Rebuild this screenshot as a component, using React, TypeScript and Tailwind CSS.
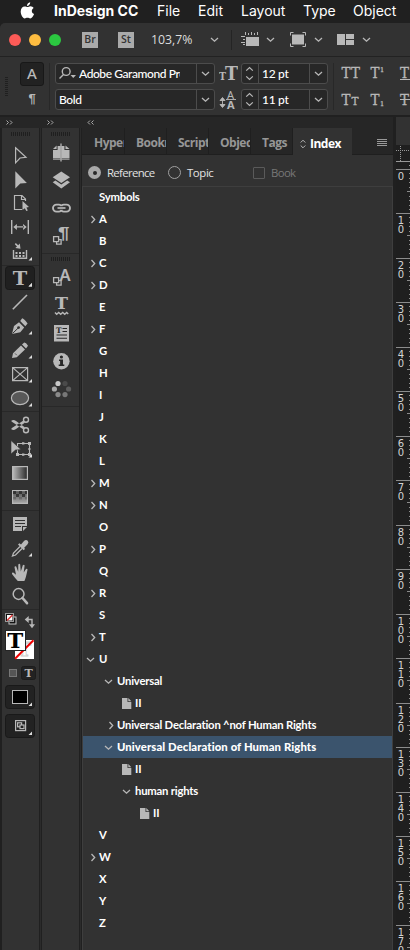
import React from "react";

const UI = "font-['Open_Sans','Noto_Sans',sans-serif]";
const SLAB = "DejaVu Serif, serif";
const G = "#b8b8b8";

type Kids = { children?: React.ReactNode };

function Chevron({ dir = "down", className = "" }: { dir?: "down" | "right"; className?: string }) {
  return (
    <svg width="9" height="9" viewBox="0 0 9 9" className={"shrink-0 " + className} fill="none" stroke={G} strokeWidth="1.3">
      {dir === "down" ? <path d="M1 3 L4.5 6.2 L8 3" /> : <path d="M2.5 1 L5.7 4.5 L2.5 8" />}
    </svg>
  );
}

/* ---------- menu bar ---------- */
function MenuBar() {
  return (
    <div className="flex h-[23px] shrink-0 items-center bg-[#202020] pl-[20px] font-['Inter',sans-serif] text-[14px] leading-none text-white">
      <svg width="15" height="17" viewBox="0 0 15 17" fill="#fff" className="mt-[-2px]">
        <path d="M10.2 0.3 C10.3 2.3 8.8 4 7 4 C6.8 2.2 8.4 0.5 10.2 0.3 Z M10.3 4.2 C11.8 4.2 13 5 13.6 5.9 C11 7.4 11.4 11 14.1 12 C13.3 14.2 11.8 16.4 10.3 16.4 C9.2 16.4 8.8 15.7 7.5 15.7 C6.1 15.7 5.7 16.4 4.7 16.4 C2.8 16.4 0.7 12.9 0.7 9.6 C0.7 6.3 2.6 4.4 4.7 4.4 C6 4.4 6.8 5.1 7.6 5.1 C8.4 5.1 9.2 4.2 10.3 4.2 Z" />
      </svg>
      <b className="-mt-0.5 ml-[19px] w-[103px] whitespace-nowrap font-bold">InDesign CC</b>
      <span className="-mt-0.5 w-[41px]">File</span>
      <span className="-mt-0.5 w-[43px]">Edit</span>
      <span className="-mt-0.5 w-[62px]">Layout</span>
      <span className="-mt-0.5 w-[50px]">Type</span>
      <span className="-mt-0.5">Object</span>
    </div>
  );
}

function Badge({ children }: Kids) {
  return <div className="flex h-4 w-4 items-center justify-center bg-[#aaaaaa] text-[10.5px] font-semibold leading-none text-[#333]">{children}</div>;
}

function TitleBar() {
  return (
    <div className="flex h-[34px] shrink-0 items-center rounded-tl-[5px] border-b border-[#222] bg-[#323232] pl-[9px]">
      <div className="flex w-[73px] gap-2">
        <i className="h-3 w-3 rounded-full bg-[#fc5b57]" />
        <i className="h-3 w-3 rounded-full bg-[#fdbc40]" />
        <i className="h-3 w-3 rounded-full bg-[#2bc840]" />
      </div>
      <Badge>Br</Badge>
      <div className="w-5" />
      <Badge>St</Badge>
      <span className="ml-[17px] w-[59px] pt-0.5 text-[12.3px] leading-none text-[#ddd]">103,7%</span>
      <Chevron />
      <i className="ml-3 h-5 w-px bg-[#242424]" />
      <svg width="19" height="15" viewBox="0 0 19 15" className="ml-[9px] mr-[6px]" fill={G}>
        <rect x="5" y="5" width="13" height="9" />
        <path d="M4 0h1v3h-1zM7 1h1v2h-1zM10 0h1v3h-1zM13 1h1v2h-1zM16 0h1v3h-1zM0 4h4v1h-4zM2 7h2v1h-2zM0 10h4v1h-4zM2 12h2v1h-2z" />
      </svg>
      <Chevron />
      <svg width="17" height="15" viewBox="0 0 17 15" className="ml-[15px] mr-[7px]" fill="none" stroke={G}>
        <rect x="2" y="2.5" width="12" height="10" fill={G} stroke="none" />
        <path d="M0.5 3.5v-3h3M12.5 0.5h3v3M0.5 11.5v3h3M12.5 14.5h3v-3" />
      </svg>
      <Chevron />
      <svg width="18" height="12" viewBox="0 0 18 12" className="ml-[14px] mr-[7px]" fill={G}>
        <path d="M0 0h8v11h-8zM9 0h8v5h-8zM9 6h8v5h-8z" />
      </svg>
      <Chevron />
    </div>
  );
}

function Stepper() {
  return (
    <svg width="17" height="19" viewBox="0 0 17 19" className="shrink-0 border-r border-[#4c4c4c]" fill="none" stroke={G} strokeWidth="1.3">
      <path d="M4.5 6.5 L8 3.2 L11.5 6.5 M4.5 12.5 L8 15.8 L11.5 12.5" />
    </svg>
  );
}

function Field({ w, children, step = false }: Kids & { w: string; step?: boolean }) {
  return (
    <div className={"flex h-[21px] items-center rounded-[3px] border border-[#4c4c4c] bg-[#272727] font-['Lato','Open_Sans',sans-serif] text-[12px] font-medium leading-none text-white " + w}>
      {step && <Stepper />}
      <div className="flex h-[19px] min-w-0 flex-1 items-center whitespace-nowrap pl-[3px]">{children}</div>
      <div className="flex h-full w-[18px] items-center justify-center border-l border-[#4c4c4c]"><Chevron /></div>
    </div>
  );
}

function ControlBar() {
  return (
    <div className="flex h-[58px] shrink-0 overflow-hidden bg-[#323232] pl-[5px]">
      <div className="mt-5 flex h-[19px] w-[15px] flex-col gap-px">
        {Array.from({ length: 10 }, (_, i) => <i key={i} className="h-px w-[3px] shrink-0 bg-[#202020]" />)}
      </div>
      <div className="mt-[5px] flex w-6 flex-col items-center">
        <div className="flex h-6 w-6 items-center justify-center rounded-[3px] border border-[#181818] bg-[#222]">
          <svg width="16" height="16" viewBox="0 0 16 16"><text x="8" y="13" textAnchor="middle" fontFamily="Noto Sans" fontSize="15" fontWeight="500" fill={G}>A</text></svg>
        </div>
        <svg width="16" height="20" viewBox="0 0 16 20" className="mt-[3px]"><text x="8" y="14" textAnchor="middle" fontFamily="Liberation Sans" fontSize="13" fontWeight="700" fill={G}>¶</text></svg>
      </div>
      <i className="ml-[5px] mr-[5px] mt-1.5 h-[47px] w-px bg-[#282828]" />
      <div className="mt-[6px] flex flex-col gap-[5px]">
        <Field w="w-[160px]">
          <svg width="19" height="15" viewBox="0 0 19 15" className="mr-px shrink-0" fill="none" stroke={G} strokeWidth="1.4">
            <circle cx="7.2" cy="5.5" r="3.9" /><path d="M4.5 8.5 L0.5 12.5" /><path d="M11.5 9h5.5l-2.75 3z" fill={G} stroke="none" />
          </svg>
          <span className="w-[101px] overflow-hidden leading-[17px] tracking-[-0.42px]">Adobe Garamond Pro</span>
        </Field>
        <Field w="w-[160px]"><span className="tracking-[-0.4px]">Bold</span></Field>
      </div>
      <div className="ml-[4px] mr-[3px] mt-[6px] flex w-[19px] flex-col gap-[5px]">
        <svg width="19" height="21" viewBox="0 0 19 21" fontFamily={SLAB} fontWeight="700" fill={G}>
          <text x="0" y="17" fontSize="11" textLength="7" lengthAdjust="spacingAndGlyphs">T</text><text x="6" y="17" fontSize="18" textLength="13" lengthAdjust="spacingAndGlyphs">T</text>
        </svg>
        <svg width="19" height="21" viewBox="0 0 19 21" fontFamily="Noto Sans" fontSize="11" fill={G}>
          <text x="8" y="9.5">A</text><text x="8" y="19.5" fontWeight="700">A</text>
          <path d="M7 10.5h10M3.5 9v9M1 11.5l2.5-3 2.5 3zM1 15.5l2.5 3 2.5-3z" stroke={G} strokeWidth="0.9" />
        </svg>
      </div>
      <div className="mt-[6px] flex flex-col gap-[5px]">
        <Field w="w-[87px]" step><span className="tracking-[-0.3px]">12 pt</span></Field>
        <Field w="w-[87px]" step><span className="tracking-[-0.3px]">11 pt</span></Field>
      </div>
      <i className="ml-[5px] mt-1.5 h-[47px] w-px bg-[#282828]" />
      <svg width="76" height="52" viewBox="0 0 76 52" className="shrink-0" fontFamily={SLAB} fill={G} stroke={G} strokeWidth=".3">
        <g fontSize="14">
          <text x="7.5" y="20.5" textLength="9" lengthAdjust="spacingAndGlyphs">T</text><text x="17" y="20.5" textLength="9" lengthAdjust="spacingAndGlyphs">T</text>
          <text x="36.5" y="20.5" textLength="9" lengthAdjust="spacingAndGlyphs">T</text>
          <text x="66" y="20.5" textLength="9" lengthAdjust="spacingAndGlyphs">T</text>
          <text x="7.5" y="47.5" textLength="9" lengthAdjust="spacingAndGlyphs">T</text><text x="17.5" y="47.5" fontSize="10.5">T</text>
          <text x="36.5" y="47.5" textLength="9" lengthAdjust="spacingAndGlyphs">T</text>
          <text x="66" y="47.5" textLength="9" lengthAdjust="spacingAndGlyphs">T</text>
        </g>
        <g fontSize="6.5"><text x="46" y="15">1</text><text x="46" y="49">1</text></g>
        <path d="M66 22h10v1h-10zM66 42h10v1h-10z" stroke="none" />
      </svg>
    </div>
  );
}

/* ---------- tools column ---------- */
function Tool({ children, more = false }: Kids & { more?: boolean }) {
  return (
    <svg width="36" height="24" viewBox="0 0 36 24" className="shrink-0" fill={G}>
      {children}
      {more && <path d="M30 17v3.5h-3.5z" fill="#ddd" />}
    </svg>
  );
}
const Rule = ({ className = "h-[3px]" }: { className?: string }) => <div className={"flex shrink-0 items-center " + className}><i className="h-px w-full bg-[#282828]" /></div>;

function Grip({ className = "" }: { className?: string }) {
  return (
    <div className={"flex h-1 shrink-0 justify-center gap-px " + className}>
      {Array.from({ length: 10 }, (_, i) => <i key={i} className="h-1 w-px bg-[#1f1f1f]" />)}
    </div>
  );
}

function Tools() {
  return (
    <div className="flex w-[37px] shrink-0 flex-col bg-[#323232]">
      <Grip className="mb-[8px] mt-[4px]" />
      <Tool><path d="M13.6 3.8 L24 13.4 L18 14 L13.6 18.8 Z" fill="none" stroke={G} strokeWidth="1.2" /></Tool>
      <Tool><path d="M13.3 3.3 L24.9 15 L18.3 15.6 L13.3 20.5 Z" /></Tool>
      <Tool>
        <path d="M20 17.5 H12.5 V3.5 H20 L23.5 7 V9 M19.5 3.5 V7.5 H23.5" fill="none" stroke={G} strokeWidth="1.2" />
        <path d="M20.5 9 L27 15 L24.4 15.5 L25.8 18.4 L24.3 19 L22.8 16.2 L20.5 18 Z" />
      </Tool>
      <Tool><path d="M9 4h1.4v14h-1.4zM25.6 4h1.4v14h-1.4zM14 10.3h8v1.2h-8zM11.3 11l3.6-3v6zM24.7 11l-3.6-3v6z" /></Tool>
      <Tool more>
        <path d="M11.5 10 V18.3 H24.5 V10" fill="none" stroke={G} strokeWidth="1.4" />
        <path d="M13.5 12h2v2h-2zM17 12h2v2h-2zM20.5 12h2v2h-2zM13.5 15h2v2h-2zM17 15h2v2h-2zM20.5 15h2v2h-2zM17.8 3.5 L18.5 8.8 L13.3 8 L15 6.4 L12.8 4.2 L13.8 3 L16.2 5.2 Z" />
      </Tool>
      <Rule className="h-[2px]" />
      <Tool more>
        <rect x="3.5" y="0.5" width="29" height="23" rx="3" fill="#202020" stroke="#191919" />
        <path d="M30 17v3.5h-3.5z" fill="#ddd" />
        <text x="18" y="18.5" textAnchor="middle" fontFamily={SLAB} fontWeight="700" fontSize="19" textLength="14.5" lengthAdjust="spacingAndGlyphs">T</text>
      </Tool>
      <Tool><path d="M10.8 19.3 L25 5" stroke={G} strokeWidth="1.6" /></Tool>
      <Tool more>
        <path d="M10 20 L12 12 L17 8.2 L22.2 13.6 L18.3 18.3 Z M18.2 7 L20.2 4.2 Q22 4.5 25.6 9.5 L23.3 12.2 Z" />
        <path d="M10.5 19.5 L16.2 14" stroke="#323232" /><circle cx="16.6" cy="13.6" r="1.4" fill="#323232" />
      </Tool>
      <Tool more>
        <path d="M10 20 L11 15.2 L19 7.4 L23 11.4 L14.8 19.2 Z M20 6.5 L22.2 4.4 Q24 4.3 26 7.8 L24 10.4 Z" />
        <path d="M13 15.4 L14.8 17.2" stroke="#323232" strokeWidth=".7" />
      </Tool>
      <Tool more><path d="M10.6 5.6h15v13h-15zM10.6 5.6l15 13M25.6 5.6l-15 13" fill="none" stroke={G} strokeWidth="1.2" /></Tool>
      <Tool more><ellipse cx="18" cy="12" rx="8.6" ry="6.6" fill="#585858" stroke={G} strokeWidth="1.2" /></Tool>
      <Rule />
      <Tool>
        <g fill="none" stroke={G}><circle cx="24" cy="6.8" r="2.5" strokeWidth="1.4" /><circle cx="24" cy="17.2" r="2.5" strokeWidth="1.4" /></g>
        <path d="M9.5 7.4 Q12 6.6 14 8 L22.8 14.2 L21.5 16.4 L9.5 8.6 Z M9.5 16.6 Q12 17.5 14 16 L22.8 9.8 L21.5 7.6 L9.5 15.3 Z" />
      </Tool>
      <Tool more>
        <path d="M15.5 6.5h12v11h-12z" fill="none" stroke={G} strokeWidth="1.1" />
        <path d="M14 16h3v3h-3zM26 5h3v3h-3zM26 16h3v3h-3zM20 5.2h2.4v2.4h-2.4zM20 16.4h2.4v2.4h-2.4zM26.4 11h2v2h-2z" />
        <path d="M9 3.5 L19 12.6 L13.5 13 L9 17 Z" stroke="#323232" strokeWidth=".6" />
      </Tool>
      <Tool>
        <defs><linearGradient id="gh"><stop stopColor="#bbb" /><stop offset="1" stopColor="#292929" /></linearGradient></defs>
        <rect x="10.6" y="5.6" width="14.8" height="12.8" fill="url(#gh)" stroke={G} strokeWidth="1.2" />
      </Tool>
      <Tool>
        <defs><linearGradient id="gv" x1="0" x2="0" y1="0" y2="1"><stop offset=".1" stopColor="#555" /><stop offset="1" stopColor="#aaa" /></linearGradient></defs>
        <rect x="10.6" y="5.6" width="14.8" height="12.8" fill="url(#gv)" stroke={G} strokeWidth="1.2" />
        <path d="M11 6h3v3h-3zM17 6h3v3h-3zM23 6h2v3h-2zM14 9h3v3h-3zM20 9h3v3h-3z" fill="#262626" opacity=".75" />
        <path d="M11 12h3v2.5h-3zM17 12h3v2.5h-3zM23 12h2v2.5h-2z" fill="#333" opacity=".3" />
      </Tool>
      <Rule />
      <Tool>
        <path d="M11 5h14v9h-5v5h-9zM21 15h4l-4 4z" />
        <path d="M13 8h10v1h-10zM13 11h10v1h-10zM13 14h6v1h-6z" fill="#323232" />
      </Tool>
      <Tool more>
        <path d="M19 8.5 L22 5 Q24 3 25.7 4.8 Q27.3 6.5 25.4 8.5 L22.2 11.8 L23 13 L21.6 14.2 L16 8.5 L17.4 7.2 Z" />
        <path d="M18 10.5 L11.5 17 L10.5 20 L13.5 19 L20 12.5" fill="none" stroke={G} strokeWidth="1.3" />
      </Tool>
      <Tool>
        <path d="M15.8 21 Q13.5 18.7 10 14 Q9.7 12.3 11.6 12.7 L14 14.7 L12.5 7.2 Q12.8 5.5 14.2 6.6 L16.2 11.8 L16.3 4.5 Q17.3 3 18.2 4.5 L18.8 11.4 L20.8 5.2 Q22 4 22.6 5.6 L21.7 12.5 L24 9 Q25.6 8.4 25.5 9.8 Q24 17.8 22.4 21 Z" />
      </Tool>
      <Tool><circle cx="16.6" cy="10" r="5.4" fill="none" stroke={G} strokeWidth="1.5" /><path d="M20.5 14 L25 19.2" stroke={G} strokeWidth="2.6" strokeLinecap="round" /></Tool>
      <Rule />
      <svg width="36" height="74" viewBox="0 0 36 74" className="shrink-0">
        <rect x="7" y="6" width="7" height="7" fill="#111" stroke="#c8c8c8" /><rect x="3.5" y="2.5" width="8" height="8" fill="#111" stroke="#999" /><rect x="5" y="4" width="5.5" height="5.5" fill="#fff" /><path d="M5 9.5l5.5-5.5" stroke="#d33" strokeWidth="1.4" />
        <path d="M26 8.5 H30 V14" fill="none" stroke={G} strokeWidth="1.4" /><path d="M22.7 8.5l4-3.4v6.8zM30 17.3l-3-4h6z" fill={G} />
        <rect x="13" y="29" width="19" height="19" fill="#fff" />
        <text x="22.5" y="45" textAnchor="middle" fontFamily={SLAB} fontWeight="700" fontSize="18" fill="none" stroke="#ccc" strokeWidth=".8">T</text>
        <path d="M13 47.7L31.5 29.2" stroke="#f00000" strokeWidth="2" />
        <rect x="3.5" y="19.5" width="20" height="20" fill="#fff" stroke="#252525" />
        <text x="13.3" y="37" textAnchor="middle" fontFamily={SLAB} fontWeight="700" fontSize="21" textLength="16" lengthAdjust="spacingAndGlyphs" fill="#000">T</text>
        <rect x="7.5" y="58.5" width="7" height="7" fill="#555" stroke="#777" />
        <rect x="19.5" y="55.5" width="14" height="13" rx="2" fill="#222" stroke="#1c1c1c" />
        <text x="26.7" y="66" textAnchor="middle" fontFamily={SLAB} fontWeight="700" fontSize="11" fill={G}>T</text>
      </svg>
      <svg width="36" height="54" viewBox="0 0 36 54" className="shrink-0">
        <g fill="#222" stroke="#191919"><rect x="3.5" y="0.5" width="29" height="23" rx="3" /><rect x="3.5" y="29.5" width="29" height="23" rx="3" /></g>
        <rect x="10.5" y="5.5" width="15" height="13" fill="#000" stroke={G} />
        <path d="M30 17.5v3.5h-3.5zM30 46.5v3.5h-3.5z" fill="#ddd" />
        <g fill="none" stroke={G} strokeWidth="1.2"><rect x="13.6" y="35.6" width="10" height="10" /><rect x="15.6" y="37.8" width="4" height="4" /><rect x="18" y="40" width="4" height="3.6" fill="#222" /></g>
      </svg>
    </div>
  );
}

/* ---------- collapsed panels column ---------- */
function Dock({ children }: Kids) {
  return <svg width="37" height="28" viewBox="0 0 37 28" className="shrink-0" fill={G}>{children}</svg>;
}

const dots: [number, number, string][] = [[16, 8.5, "#c8c8c8"], [23, 8.5, "#4a4a4a"], [26.6, 14, "#5d5d5d"], [23, 19.6, "#777"], [16, 19.6, "#8a8a8a"], [12.4, 14, "#aaa"]];

function Panels() {
  return (
    <div className="flex w-[37px] shrink-0 flex-col bg-[#323232]">
      <Grip className="mb-[2px] mt-[4px]" />
      <Dock>
        <path d="M15.6 8h2.9v12.5h-7.5v-8.5h4.6zM22.4 8h-2.9v12.5h8v-8.5h-5.1zM11 11l3.6-3.5v3.5zM27.5 11l-4-3.5v3.5z" />
        <path d="M11 21.5h7.5M19.5 21.5h8" stroke="#888" /><path d="M19 5.5v18" stroke="#ddd" strokeWidth="1" />
      </Dock>
      <Dock><path d="M19.3 5.5 L28 11.2 L19.3 17 L10.7 11.2 Z" /><path d="M10.7 16.2 L13.4 14.5 L19.3 18.5 L25.2 14.5 L28 16.2 L19.3 22.5 Z" /></Dock>
      <Dock>
        <g fill="none" stroke={G} strokeWidth="1.9">
          <rect x="11" y="10.6" width="9.2" height="7" rx="3.5" /><rect x="18.4" y="10.6" width="9.6" height="7" rx="3.5" />
        </g>
        <path d="M15.5 14h8" stroke="#323232" strokeWidth="3.6" /><path d="M15.5 14h8" stroke={G} strokeWidth="1.7" />
      </Dock>
      <Dock>
        <text x="16" y="17" fontFamily="Liberation Sans" fontWeight="700" fontSize="16" textLength="11.5" lengthAdjust="spacingAndGlyphs">¶</text>
        <path d="M14.6 17.6h4.5v4.5h-4.5z" fill="#323232" stroke={G} strokeWidth="1.3" /><path d="M11.6 14.6h5v5h-5z" fill="#323232" stroke={G} strokeWidth="1.3" />
      </Dock>
      <Rule className="h-[7px]" />
      <Grip className="mb-[2px]" />
      <Dock>
        <text x="17.6" y="18.4" fontFamily="Noto Sans" fontWeight="600" fontSize="16.5">A</text>
        <path d="M14.6 17.6h4.5v4.5h-4.5z" fill="#323232" stroke={G} strokeWidth="1.3" /><path d="M11.6 14.6h5v5h-5z" fill="#323232" stroke={G} strokeWidth="1.3" />
      </Dock>
      <Dock>
        <text x="19.5" y="18" textAnchor="middle" fontFamily={SLAB} fontWeight="700" fontSize="17" textLength="13" lengthAdjust="spacingAndGlyphs">T</text>
        <path d="M13 21.5l1.7 1.8 2-1.8 2 1.8 2-1.8 2 1.8 2-1.8 1.5 1.5" fill="none" stroke={G} strokeWidth="1.4" />
      </Dock>
      <Dock>
        <path d="M12 6h15v16.5h-15z" />
        <text x="14" y="14" fontFamily={SLAB} fontWeight="700" fontSize="7.5" fill="#282828">T</text>
        <path d="M20.5 9h4.5v1h-4.5zM20.5 12h4.5v1h-4.5zM14.5 15.5h10.5v1h-10.5zM14.5 18.8h10.5v1h-10.5z" fill="#282828" />
      </Dock>
      <Dock><circle cx="19.4" cy="14.2" r="8.2" /><path d="M17 12.5h4v5h1.3v1.6h-5.6v-1.6h1.4v-3.4h-1.1z" fill="#282828" /><circle cx="19.4" cy="10" r="1.6" fill="#282828" /></Dock>
      <Dock>{dots.map(([x, y, c]) => <circle key={x + "-" + y} cx={x} cy={y} r="2.6" fill={c} />)}</Dock>
      <Rule className="h-[6px]" />
    </div>
  );
}

/* ---------- index panel ---------- */
type Row = { t: string; lv?: number; a?: "down" | "right"; page?: boolean; sel?: boolean };
const closed = new Set(["A", "C", "D", "F", "M", "N", "P", "R", "T", "W"]);
const letter = (t: string): Row => ({ t, a: closed.has(t) ? "right" : undefined });
const rows: Row[] = [
  { t: "Symbols" },
  ..."ABCDEFGHIJKLMNOPQRST".split("").map(letter),
  { t: "U", a: "down" },
  { t: "Universal", lv: 1, a: "down" },
  { t: "II", lv: 2, page: true },
  { t: "Universal Declaration ^nof Human Rights", lv: 1, a: "right" },
  { t: "Universal Declaration of Human Rights", lv: 1, a: "down", sel: true },
  { t: "II", lv: 2, page: true },
  { t: "human rights", lv: 2, a: "down" },
  { t: "II", lv: 3, page: true },
  ..."VWXYZ".split("").map(letter),
];
const indent = ["pl-0", "pl-[18px]", "pl-9", "pl-[54px]"];

function IndexRow({ r }: { r: Row }) {
  return (
    <div className={"flex h-[22px] shrink-0 items-center whitespace-nowrap font-['Lato','Open_Sans',sans-serif] text-[11.3px] leading-none text-white " + indent[r.lv ?? 0] + (r.sel ? " bg-[#3b546d] font-black tracking-[0.1px]" : " font-bold tracking-[-0.21px]")}>
      <span className={"flex w-4 shrink-0 " + (r.page ? "justify-start pl-[3px]" : r.a === "right" ? "justify-end pr-[1px]" : "pl-[3px]")}>
        {r.a && <Chevron dir={r.a} />}
        {r.page && <svg width="10" height="11" viewBox="0 0 10 11" className="shrink-0" fill={G}><path d="M0 0h5.5v4h3.8v7h-9.3zM6.3 0l3 3.2h-3z" /></svg>}
      </span>
      <span>{r.t}</span>
    </div>
  );
}

function IndexPanel() {
  return (
    <div className="flex w-[311px] shrink-0 flex-col bg-[#323232]">
      <div className="flex h-[27px] shrink-0 bg-[#262626] text-[12px] font-bold leading-none tracking-[-0.5px] text-[#969696]">
        {["Hyper", "Bookm", "Script", "Objec", "Tags"].map((t, i) => (
          <div key={t} className={"flex items-center border-b border-r border-[#1f1f1f] pt-[4px] " + (i ? "w-[42px] pl-[11px]" : "w-[43px] pl-[12px]")}>
            <span className="w-[30px] overflow-hidden whitespace-nowrap leading-[18px]">{t}</span>
          </div>
        ))}
        <div className="flex w-[59px] items-center bg-[#323232] pl-[7px] pt-[4px] text-white">
          <svg width="6" height="10" viewBox="0 0 6 10" className="mr-[4px] shrink-0" fill="none" stroke={G}><path d="M.7 3.5L3 1.2 5.3 3.5M.7 6.5L3 8.8 5.3 6.5" /></svg>
          Index
        </div>
        <div className="flex flex-1 items-center justify-end border-b border-[#1f1f1f] pr-[6px] pt-[3px]">
          <svg width="10" height="8" viewBox="0 0 10 8" fill="#999"><path d="M0 0h10v1h-10zM0 2h10v1h-10zM0 4h10v1h-10zM0 6h10v1h-10z" /></svg>
        </div>
      </div>
      <div className="flex h-[31px] shrink-0 items-center pl-[6px] pt-[4px] text-[11.4px] font-medium leading-none tracking-[-0.66px] text-[#e2e2e2]">
        <i className="mr-[6px] flex h-[13px] w-[13px] items-center justify-center rounded-full bg-[#a9a9a9]"><i className="h-[4px] w-[4px] rounded-full bg-[#282828]" /></i>
        <span className="w-[61px]">Reference</span>
        <i className="mr-[6px] h-[13px] w-[13px] rounded-full border border-[#a0a0a0]" />
        <span className="w-[66px] tracking-[-0.4px]">Topic</span>
        <i className="mr-[6px] h-3 w-3 rounded-[1px] border border-[#5a5a5a]" />
        <span className="text-[#777]">Book</span>
      </div>
      <div className="flex flex-1 flex-col border-x border-t border-[#3e3e3e]">
        <div className="-mt-px flex flex-col">{rows.map((r, i) => <IndexRow key={i} r={r} />)}</div>
      </div>
    </div>
  );
}

function Ruler() {
  return (
    <div className="ml-[3px] flex w-[14px] shrink-0 flex-col overflow-hidden bg-[#1f1f1f]">
      <div className="h-[17px] shrink-0 bg-[#323232]" />
      <svg width="14" height="24" viewBox="0 0 14 24" className="shrink-0" stroke="#999" fill="none">
        <path d="M4.5 1v16M0 5.5h14" strokeDasharray="1 1" /><path d="M0 16.5h14" /><path d="M13 20.5h1" />
      </svg>
      {Array.from({ length: 18 }, (_, n) => (
        <div key={n} className="flex h-[44.47px] shrink-0 border-t border-[#8c8c8c]">
          <div className="flex w-[10px] flex-col items-center pt-[2px] font-['DejaVu_Sans',sans-serif] text-[10px] leading-[9px] text-[#d4d4d4]">
            {String(n * 10).split("").map((c, i) => <span key={i} className="h-[9px]">{c}</span>)}
          </div>
          <svg width="4" height="44" viewBox="0 0 4 44" fill="#8c8c8c">
            {Array.from({ length: 9 }, (_, k) => <rect key={k} x={k === 4 ? 1 : 3} y={Math.round((k + 1) * 4.447) - 1} width="4" height="1" />)}
          </svg>
        </div>
      ))}
    </div>
  );
}

function Collapse({ d, className }: { d: string; className: string }) {
  return <div className={className}><svg width="7" height="5" viewBox="0 0 7 5" fill="none" stroke="#aaa"><path d={d} /></svg></div>;
}

export default function App() {
  const right = "M.5 .5l2 2-2 2M4 .5l2 2-2 2";
  return (
    <div className={"flex h-[950px] w-[410px] flex-col overflow-hidden bg-[#202020] " + UI}>
      <MenuBar />
      <TitleBar />
      <ControlBar />
      <div className="flex min-h-0 flex-1 flex-col border-t-2 border-[#202020]">
        <div className="flex h-[11px] shrink-0">
          <div className="flex w-[393px] items-center bg-[#262626] pl-[6px]">
            <Collapse d={right} className="w-[41px]" />
            <Collapse d={right} className="w-[40px]" />
            <Collapse d="M3 .5l-2 2 2 2M6.5 .5l-2 2 2 2" className="w-4" />
          </div>
          <div className="ml-[3px] w-[14px] bg-[#323232]" />
        </div>
        <div className="flex min-h-0 flex-1 pl-[2px]">
          <Tools />
          <i className="mx-px w-px bg-[#2b2b2b]" />
          <Panels />
          <i className="mx-px w-px bg-[#2b2b2b]" />
          <IndexPanel />
          <Ruler />
        </div>
      </div>
    </div>
  );
}
